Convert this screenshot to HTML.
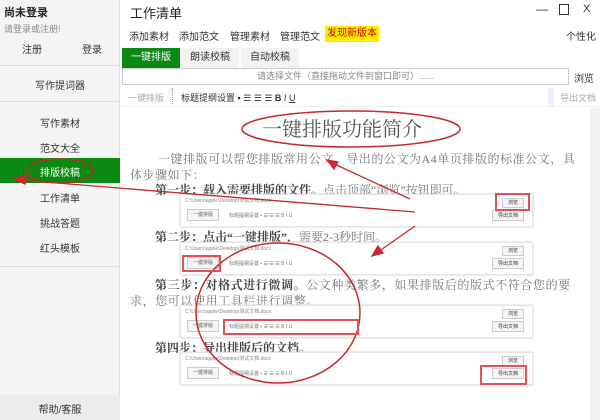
<!DOCTYPE html><html><head><meta charset="utf-8"><style>
*{margin:0;padding:0;box-sizing:border-box}
body{width:600px;height:420px;overflow:hidden;background:#fff;font-family:"Liberation Sans","Noto Sans CJK SC",sans-serif;font-size:10px;color:#333;position:relative}
.a{position:absolute;white-space:nowrap}
.side{position:absolute;left:0;top:0;width:120px;height:420px;background:#f4f4f4;border-right:1px solid #ddd}
.hr{position:absolute;left:0;width:120px;height:1px;background:#ddd}
.c{text-align:center;width:120px;left:0}
.serif{font-family:"Liberation Serif","Noto Serif CJK SC",serif}
.shot{position:absolute;left:180px;width:353px;height:33px;background:#fff;border:1px solid #e6e6e6;box-shadow:0 0 2px #ccc}
.shot .p{position:absolute;left:4px;top:2px;font-size:5px;color:#888}
.shot .b1{position:absolute;left:6px;top:14px;width:32px;height:12px;border:1px solid #ccc;background:#f5f5f5;font-size:5px;text-align:center;line-height:11px;color:#666}
.shot .t{position:absolute;left:48px;top:17px;font-size:5px;color:#777}
.shot .b2{position:absolute;right:8px;top:3px;width:22px;height:10px;border:1px solid #ccc;background:#f5f5f5;font-size:5px;text-align:center;line-height:9px}
.shot .b3{position:absolute;right:8px;top:15px;width:32px;height:11px;border:1px solid #ccc;background:#f5f5f5;font-size:5px;text-align:center;line-height:10px}
.tx{font-size:12px;color:#777}
</style></head><body>
<div class="side">
<div class="a" style="left:4px;top:4px;font-size:11px;font-weight:bold;color:#222">尚未登录</div>
<div class="a" style="left:4px;top:22px;font-size:9px;color:#888">请登录或注册!</div>
<div class="a" style="left:22px;top:41px;font-size:10px">注册</div>
<div class="a" style="left:82px;top:41px;font-size:10px">登录</div>
<div class="hr" style="top:65px"></div>
<div class="a c" style="top:77px">写作提词器</div>
<div class="hr" style="top:101px"></div>
<div class="a c" style="top:115px">写作素材</div>
<div class="a c" style="top:140px">范文大全</div>
<div class="a" style="left:0;top:158px;width:120px;height:25px;background:#0a8a12"></div>
<div class="a c" style="top:164px;color:#fff">排版校稿</div>
<div class="a c" style="top:190px">工作清单</div>
<div class="a c" style="top:215px">挑战答题</div>
<div class="a c" style="top:240px">红头模板</div>
<div class="hr" style="top:266px"></div>
<div class="a" style="left:0;top:395px;width:120px;height:25px;background:#ececec"></div>
<div class="a c" style="top:401px">帮助/客服</div>
</div>
<div class="a" style="left:130px;top:3px;font-size:13px;color:#222">工作清单</div>
<div class="a" style="left:536px;top:2px;font-size:12px">—</div>
<div class="a" style="left:559px;top:4px;width:10px;height:11px;border:1.5px solid #333"></div>
<div class="a" style="left:583px;top:3px;font-size:11px">X</div>
<div class="a" style="left:129px;top:28px">添加素材</div>
<div class="a" style="left:179px;top:28px">添加范文</div>
<div class="a" style="left:230px;top:28px">管理素材</div>
<div class="a" style="left:280px;top:28px">管理范文</div>
<div class="a" style="left:325px;top:26px;width:54px;height:16px;background:#ffee00;color:#c00;text-align:center;line-height:16px">发现新版本</div>
<div class="a" style="left:566px;top:28px">个性化</div>
<div class="a" style="left:122px;top:48px;width:58px;height:20px;background:#0a8a12;color:#fff;text-align:center;line-height:20px">一键排版</div>
<div class="a" style="left:181px;top:48px;width:58px;height:20px;background:#f2f2f2;text-align:center;line-height:20px">朗读校稿</div>
<div class="a" style="left:241px;top:48px;width:58px;height:20px;background:#f2f2f2;text-align:center;line-height:20px">自动校稿</div>
<div class="a" style="left:122px;top:68px;width:447px;height:17px;border:1px solid #ccc;background:#fff;text-align:center;line-height:15px;font-size:9px;color:#888">请选择文件（直接拖动文件到窗口即可）......</div>
<div class="a" style="left:574px;top:70px;font-size:10px">浏览</div>
<div class="a" style="left:128px;top:91px;font-size:9px;color:#aaa">一键排版</div>
<div class="a" style="left:172px;top:88px;height:16px;border-left:1px dotted #999"></div>
<div class="a" style="left:181px;top:91px;font-size:9px">标题提纲设置 ▪ ☰ ☰ ☰ <b>B</b> <i>I</i> <u>U</u></div>
<div class="a" style="left:548px;top:88px;width:6px;height:18px;background:#eef"></div>
<div class="a" style="left:560px;top:91px;font-size:9px;color:#aaa">导出文档</div>
<div class="a" style="left:122px;top:106px;width:478px;height:1px;background:#eee"></div>
<div class="a" style="left:590px;top:108px;width:10px;height:312px;background:#f2f2f2"></div>
<div class="a serif" style="left:262px;top:113px;font-size:20px;color:#555">一键排版功能简介</div>
<div class="a serif tx" style="left:158px;top:150px;letter-spacing:0.55px">一键排版可以帮您排版常用公文，导出的公文为A4单页排版的标准公文，具</div>
<div class="a serif tx" style="left:130px;top:166px;letter-spacing:0.55px">体步骤如下：</div>
<div class="a serif tx" style="left:155px;top:181px"><b style="color:#444">第一步：载入需要排版的文件。</b>点击顶部“浏览”按钮即可。</div>
<div class="a serif tx" style="left:155px;top:228px"><b style="color:#444">第二步：点击“一键排版”，</b>需要2-3秒时间。</div>
<div class="a serif tx" style="left:155px;top:276px;letter-spacing:0.6px"><b style="color:#444">第三步：对格式进行微调。</b>公文种类繁多，如果排版后的版式不符合您的要</div>
<div class="a serif tx" style="left:130px;top:292px;letter-spacing:0.6px">求，您可以使用工具栏进行调整。</div>
<div class="a serif tx" style="left:155px;top:339px;color:#444"><b>第四步：导出排版后的文档。</b></div>
<div class="shot" style="top:194px"><div class="p">C:\Users\apple\Desktop\测试文档.docx</div><div class="b1">一键排版</div><div class="t">标题提纲设置 ▪ ☰ ☰ ☰ B I U</div><div class="b2">浏览</div><div class="b3">导出文档</div></div>
<div class="shot" style="top:242px"><div class="p">C:\Users\apple\Desktop\测试文档.docx</div><div class="b1">一键排版</div><div class="t">标题提纲设置 ▪ ☰ ☰ ☰ B I U</div><div class="b2">浏览</div><div class="b3">导出文档</div></div>
<div class="shot" style="top:305px"><div class="p">C:\Users\apple\Desktop\测试文档.docx</div><div class="b1">一键排版</div><div class="t">标题提纲设置 ▪ ☰ ☰ ☰ B I U</div><div class="b2">浏览</div><div class="b3">导出文档</div></div>
<div class="shot" style="top:352px"><div class="p">C:\Users\apple\Desktop\测试文档.docx</div><div class="b1">一键排版</div><div class="t">标题提纲设置 ▪ ☰ ☰ ☰ B I U</div><div class="b2">浏览</div><div class="b3">导出文档</div></div>
<svg class="a" style="left:0;top:0" width="600" height="420" viewBox="0 0 600 420" fill="none" stroke="#c8282e">
<ellipse cx="351" cy="129" rx="109" ry="18" stroke-width="1.5"/>
<ellipse cx="60" cy="171" rx="33" ry="12" stroke-width="1.3"/>
<ellipse cx="278" cy="313" rx="82" ry="70" stroke-width="1.5"/>
<rect x="496" y="194" width="33" height="16" stroke="#e05060" stroke-width="2"/>
<rect x="183" y="256" width="37" height="15" stroke="#e05060" stroke-width="2"/>
<rect x="224" y="320" width="134" height="14" stroke="#e05060" stroke-width="2"/>
<rect x="481" y="366" width="45" height="18" stroke="#e05060" stroke-width="2"/>
<g stroke-width="1.3" fill="#c8282e">
<line x1="410" y1="199" x2="330" y2="162"/><polygon points="327,160 338,162 334,169"/>
<line x1="415" y1="212" x2="20" y2="180"/><polygon points="14,179 26,175 25,184"/>
<line x1="415" y1="226" x2="378" y2="252"/><polygon points="372,256 378,246 383,253"/>
</g></svg>
</body></html>
